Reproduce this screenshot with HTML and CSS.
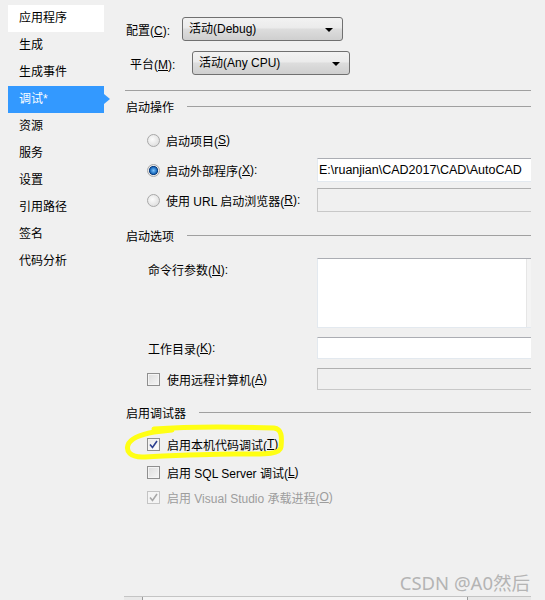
FILE: index.html
```html
<!DOCTYPE html>
<html lang="zh-CN">
<head>
    <meta charset="UTF-8">
    <title>项目属性 - 调试</title>
    <link rel="stylesheet" href="styles.css">
</head>
<body>
<div class="window">
    <ul class="nav">
        <li class="nav-item first">应用程序</li>
        <li class="nav-item">生成</li>
        <li class="nav-item">生成事件</li>
        <li class="nav-item active">调试*</li>
        <li class="nav-item">资源</li>
        <li class="nav-item">服务</li>
        <li class="nav-item">设置</li>
        <li class="nav-item">引用路径</li>
        <li class="nav-item">签名</li>
        <li class="nav-item">代码分析</li>
    </ul>

    <div class="main">
        <div class="combo-row">
            <span class="combo-label">配置(<u>C</u>):</span>
            <div class="combo combo-config">活动(Debug)<span class="caret"></span></div>
        </div>
        <div class="combo-row platform">
            <span class="combo-label">平台(<u>M</u>):</span>
            <div class="combo combo-platform">活动(Any CPU)<span class="caret"></span></div>
        </div>

        <div class="rule"></div>

        <div class="group-head first-head"><span>启动操作</span><i></i></div>
        <div class="opt-row r1">
            <label class="opt"><span class="radio"></span>启动项目(<u>S</u>)</label>
        </div>
        <div class="opt-row r2">
            <label class="opt"><span class="radio on"></span>启动外部程序(<u>X</u>):</label>
            <div class="field">E:\ruanjian\CAD2017\CAD\AutoCAD</div>
        </div>
        <div class="opt-row r2">
            <label class="opt"><span class="radio"></span>使用 URL 启动浏览器(<u>R</u>):</label>
            <div class="field disabled"></div>
        </div>

        <div class="group-head head-2"><span>启动选项</span><i></i></div>
        <div class="opt-row args">
            <label class="opt plain">命令行参数(<u>N</u>):</label>
            <div class="field area"><span class="area-body"></span><span class="area-bar"></span></div>
        </div>
        <div class="opt-row small">
            <label class="opt plain">工作目录(<u>K</u>):</label>
            <div class="field"></div>
        </div>
        <div class="opt-row small">
            <label class="opt"><span class="check"></span>使用远程计算机(<u>A</u>)</label>
            <div class="field disabled"></div>
        </div>

        <div class="group-head head-3"><span>启用调试器</span><i></i></div>
        <div class="check-row c1">
            <span class="check on"><svg width="9" height="9" viewBox="0 0 9 9"><path d="M1 4.5 L3.5 7.5 L8 1" fill="none" stroke="#2c3f8f" stroke-width="1.6"/></svg></span>启用本机代码调试(<u>T</u>)
        </div>
        <div class="check-row c2">
            <span class="check"></span>启用 SQL Server 调试(<u>L</u>)
        </div>
        <div class="check-row c3 muted">
            <span class="check off"><svg width="9" height="9" viewBox="0 0 9 9"><path d="M1 4.5 L3.5 7.5 L8 1" fill="none" stroke="#a8a8a8" stroke-width="1.6"/></svg></span>启用 Visual Studio 承载进程(<u>O</u>)
        </div>

        <div class="hscroll">
            <span class="hs-arrow"></span>
            <span class="hs-thumb"></span>
            <span class="hs-arrow"></span>
        </div>
    </div>

    <svg class="marker" width="170" height="40" viewBox="0 0 170 40">
        <path d="M30 6 C70 3 120 4 150 5 C158 6 158 14 157 24 C156 32 140 31 110 31 C80 31 40 33 18 34 C6 34 2 28 4 22 C6 16 14 12 30 9 L48 7"
              fill="none" stroke="#ffff14" stroke-width="5" stroke-linecap="round" stroke-linejoin="round"/>
    </svg>

    <div class="watermark">CSDN @A0然后</div>
</div>
</body>
</html>
```

FILE: styles.css
```css
body {
    margin: 0;
    background: #f0f0f0;
    font-family: "Liberation Sans", "Noto Sans CJK SC", sans-serif;
    font-size: 12px;
    color: #000;
}
u {
    text-decoration: underline;
}
.window {
    position: relative;
    display: flex;
    width: 545px;
    height: 600px;
    overflow: hidden;
}

/* left navigation */
.nav {
    list-style: none;
    margin: 0;
    padding: 5px 0 0 8px;
    width: 102px;
}
.nav-item {
    position: relative;
    width: 85px;
    height: 27px;
    line-height: 27px;
    padding-left: 11px;
}
.nav-item.first {
    background: #fff;
}
.nav-item.active {
    background: #3399ff;
    color: #fff;
}
.nav-item.active::after {
    content: "";
    position: absolute;
    right: -6px;
    top: 8px;
    border-left: 6px solid #3399ff;
    border-top: 5px solid transparent;
    border-bottom: 5px solid transparent;
}

/* main panel */
.main {
    flex: 1;
    display: flex;
    flex-direction: column;
    padding: 17px 14px 0 16px;
}
.combo-row {
    display: flex;
    align-items: center;
    height: 24px;
}
.combo-row.platform {
    margin-top: 10px;
    padding-left: 4px;
}
.combo-label {
    width: 56px;
}
.platform .combo-label {
    width: 62px;
}
.combo {
    position: relative;
    box-sizing: border-box;
    height: 24px;
    line-height: 22px;
    padding-left: 6px;
    border: 1px solid #707070;
    border-radius: 3px;
    background: linear-gradient(#f2f2f2 0%, #ebebeb 45%, #dddddd 50%, #cfcfcf 100%);
}
.combo-config {
    width: 161px;
}
.combo-platform {
    width: 158px;
}
.caret {
    position: absolute;
    right: 9px;
    top: 10px;
    border-top: 4px solid #000;
    border-left: 4px solid transparent;
    border-right: 4px solid transparent;
}
.rule {
    margin: 15px 0 0 -1px;
    height: 1px;
    background: #a0a0a0;
}

.group-head {
    display: flex;
    align-items: center;
    height: 16px;
}
.group-head span {
    margin-right: 13px;
}
.group-head i {
    flex: 1;
    height: 1px;
    background: #a0a0a0;
}
.first-head {
    margin-top: 7px;
}
.head-2 {
    margin-top: 15px;
}
.head-3 {
    margin-top: 14px;
}

.opt-row {
    display: flex;
    align-items: center;
    height: 24px;
}
.opt-row.r1 {
    margin-top: 14px;
}
.opt-row.r2 {
    margin-top: 6px;
}
.opt-row.args {
    align-items: flex-start;
    height: 70px;
    margin-top: 15px;
}
.opt-row.small {
    height: 22px;
    margin-top: 9px;
}
.opt {
    display: flex;
    align-items: center;
    width: 170px;
    padding-left: 21px;
    flex-shrink: 0;
}
.opt.plain {
    padding-left: 22px;
    width: 169px;
}
.args .opt {
    padding-top: 3px;
}
.field {
    flex: 1;
    box-sizing: border-box;
    height: 100%;
    padding-left: 1px;
    line-height: 22px;
    background: #fff;
    border: 1px solid #e3e9ef;
    border-top-color: #abadb3;
    border-right: none;
    white-space: nowrap;
    overflow: hidden;
    font-size: 12.5px;
}
.field.disabled {
    background: #f0f0f0;
    border-color: #c8c8c8;
    border-top-color: #b0b0b0;
}
.field.area {
    display: flex;
    padding: 0;
}
.area-body {
    flex: 1;
}
.area-bar {
    width: 4px;
    border-left: 1px solid #e6e6e6;
    background: #f4f4f4;
}

/* radios and checks */
.radio {
    box-sizing: border-box;
    width: 13px;
    height: 13px;
    margin-right: 6px;
    border: 1px solid #a8a8a8;
    border-radius: 50%;
    background: radial-gradient(circle at 40% 40%, #fcfcfc 0%, #e2e2e2 70%, #d0d0d0 100%);
}
.radio.on {
    background: radial-gradient(circle, #7ec5ff 0%, #1e6fc0 40%, #0b3a7a 55%, #e8e8e8 62%, #d8d8d8 100%);
}
.check {
    box-sizing: border-box;
    display: inline-flex;
    align-items: center;
    justify-content: center;
    width: 13px;
    height: 13px;
    margin-right: 7px;
    border: 1px solid #8f8f8f;
    background: linear-gradient(135deg, #dcdcdc, #f6f6f6);
    box-shadow: inset 0 0 0 1px #f4f4f4;
}
.check.on {
    background: linear-gradient(135deg, #e8e8e8, #ffffff);
}
.check.off {
    border-color: #c4c4c4;
    background: #f4f4f4;
}
.check-row {
    display: flex;
    align-items: center;
    height: 20px;
    padding-left: 21px;
}
.check-row.c1 {
    margin-top: 14px;
}
.check-row.c2 {
    margin-top: 8px;
}
.check-row.c3 {
    margin-top: 5px;
}
.muted {
    color: #9d9d9d;
}

/* bottom scrollbar edge */
.hscroll {
    display: flex;
    margin: auto 0 0 -2px;
    height: 3px;
    border-top: 1px solid #c4c4c4;
    background: #e8e8e8;
}
.hs-arrow {
    width: 18px;
}
.hs-thumb {
    width: 324px;
    border-left: 1px solid #9a9a9a;
    border-right: 1px solid #9a9a9a;
    background: #f4f4f4;
}

/* annotations over the screenshot */
.marker {
    position: absolute;
    left: 124px;
    top: 423px;
}
.watermark {
    position: absolute;
    right: 15px;
    top: 569px;
    font-family: "Noto Sans", "Noto Sans CJK SC", sans-serif;
    font-size: 18.5px;
    color: #b4b4b4;
}
```
